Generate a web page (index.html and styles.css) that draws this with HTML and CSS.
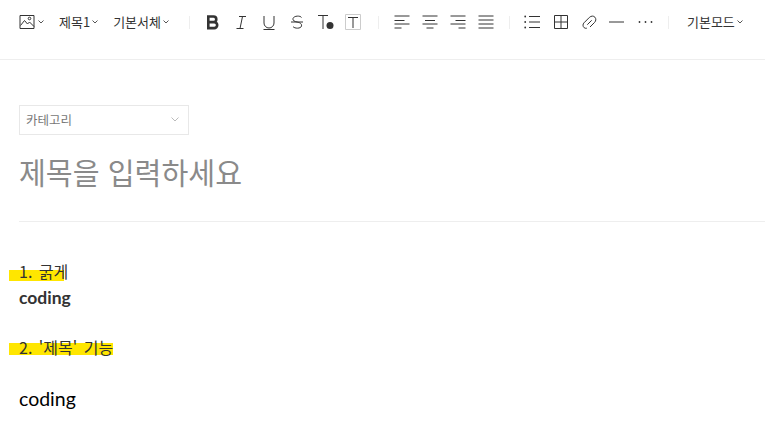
FILE: index.html
```html
<!DOCTYPE html>
<html lang="ko">
<head>
  <meta charset="UTF-8" />
  <title>글쓰기</title>
  <link rel="stylesheet" href="styles.css">
</head>
<body>

<!-- Toolbar -->
<header class="toolbar">
  <div class="tool-group group-insert">
    <button class="tool">
      <svg class="icon" width="16" height="16" viewBox="0 0 16 16"><path d="M1 1.500h14v13H1zM1.500 11.500l4-5 3 3.500 2-2 4.500 4.500" /><circle cx="10.500" cy="4.500" r="1.300" /></svg>
      <svg class="chev" width="6" height="4" viewBox="0 0 6 4"><path d="M.5.500 3 3 5.500.500" /></svg>
    </button>
    <button class="tool tool-text">제목1<svg class="chev" width="6" height="4" viewBox="0 0 6 4"><path d="M.5.500 3 3 5.500.500" /></svg></button>
    <button class="tool tool-text">기본서체<svg class="chev" width="6" height="4" viewBox="0 0 6 4"><path d="M.5.500 3 3 5.500.500" /></svg></button>
  </div>
  <span class="divider divider-a"></span>
  <div class="tool-group group-format">
    <svg class="icon" width="16" height="16" viewBox="0 0 16 16"><path class="thick" d="M3.300 2.500h5.200a2.800 2.800 0 0 1 0 5.600h-5.200zM3.300 8.100h5.900a3 3 0 0 1 0 6h-5.900z" /></svg>
    <svg class="icon" width="16" height="16" viewBox="0 0 16 16"><path d="M6 2.500h7M3.500 14.500h7M9.500 2.500 7 14.500" /></svg>
    <svg class="icon" width="16" height="16" viewBox="0 0 16 16"><path d="M3 2v7a5 5 0 0 0 10 0V2M2.500 15.500h11" /></svg>
    <svg class="icon" width="16" height="16" viewBox="0 0 16 16"><path d="M12.500 3.500C11.500 1.500 5 1.500 4 4.500 3.500 6.500 5.500 7.500 8 8c2.500.5 5 1.500 4.500 4-.5 2.800-7 2.800-8.500.5M2 8h12" /></svg>
    <svg class="icon icon-wide" width="17" height="16" viewBox="0 0 17 16"><path d="M1 1.500h10M6 1.500V15" /><circle class="dot" cx="13" cy="11.500" r="3.500" /></svg>
    <svg class="icon" width="16" height="16" viewBox="0 0 16 16"><path class="frame" d="M.5.500h15v15H.5z" /><path d="M3 3.500h10M8 3.500V14" /></svg>
  </div>
  <span class="divider divider-b"></span>
  <div class="tool-group group-align">
    <svg class="icon" width="16" height="14" viewBox="0 0 16 14"><path d="M.5 1h15M.5 5.500h10M.5 9h15M.5 13h7" /></svg>
    <svg class="icon" width="16" height="14" viewBox="0 0 16 14"><path d="M.5 1h15M3 5.500h10M.5 9h15M4.500 13h7" /></svg>
    <svg class="icon" width="16" height="14" viewBox="0 0 16 14"><path d="M.5 1h15M5.500 5.500h10M.5 9h15M8.500 13h7" /></svg>
    <svg class="icon" width="16" height="14" viewBox="0 0 16 14"><path d="M.5 1h15M.5 5h15M.5 9h15M.5 13h15" /></svg>
  </div>
  <span class="divider divider-c"></span>
  <div class="tool-group group-insert2">
    <svg class="icon" width="16" height="14" viewBox="0 0 16 14"><path d="M5 1.500h11M5 7h11M5 12.500h11" /><circle class="dot" cx="1.200" cy="1.500" r=".9" /><circle class="dot" cx="1.200" cy="7" r=".9" /><circle class="dot" cx="1.200" cy="12.500" r=".9" /></svg>
    <svg class="icon" width="14" height="14" viewBox="0 0 14 14"><path d="M.5.500h13v13H.5zM7 .5v13M.5 7h13" /></svg>
    <svg class="icon icon-link" width="15" height="15" viewBox="0 0 15 15"><path d="M5.300 9.700 9.700 5.300M4.800 13.200c-2 .6-3.800-1-3.800-3 0-1 .4-1.700 1-2.400L7.400 2.400c1.800-1.700 4.200-1.700 5.500-.2 1.300 1.500 1.200 3.700-.3 5.200L8 12" /></svg>
    <svg class="icon" width="15" height="14" viewBox="0 0 15 14"><path d="M0 7h15" /></svg>
    <svg class="icon" width="15" height="14" viewBox="0 0 15 14"><circle class="dot" cx="1.500" cy="7" r=".9" /><circle class="dot" cx="7.500" cy="7" r=".9" /><circle class="dot" cx="13.500" cy="7" r=".9" /></svg>
  </div>
  <span class="divider divider-d"></span>
  <button class="tool tool-text">기본모드<svg class="chev" width="6" height="4" viewBox="0 0 6 4"><path d="M.5.500 3 3 5.500.500" /></svg></button>
</header>

<!-- Editor -->
<main class="editor">
  <div class="category">
    <span>카테고리</span>
    <svg class="chev chev-light" width="8" height="5" viewBox="0 0 8 5"><path d="M.5.500 4 4 7.500.500" /></svg>
  </div>
  <h1 class="title">제목을 입력하세요</h1>
  <hr class="rule">
  <div class="content">
    <p class="line first"><span class="mark mark-short">1. 굵게</span></p>
    <p class="line bold">coding</p>
    <p class="line second"><span class="mark mark-tall">2. '제목' 기능</span></p>
    <p class="heading">coding</p>
  </div>
</main>

</body>
</html>
```

FILE: styles.css
```css
body {
  margin: 0;
  background: #fff;
  color: #333;
  font-family: 'Noto Sans CJK KR', 'Noto Sans', sans-serif;
  overflow: hidden;
}

.toolbar {
  display: flex;
  align-items: center;
  height: 44px;
  padding: 0 0 15px 19px;
  border-bottom: 1px solid #eee;
}

.tool-group {
  display: flex;
  align-items: center;
}

.tool {
  display: flex;
  align-items: center;
  padding: 0;
  border: none;
  background: none;
  color: #333;
  font: inherit;
}

.tool-text {
  font-size: 13px;
  line-height: 16px;
}

.tool-text .chev {
  margin-left: 2px;
}

.tool .icon + .chev {
  margin-left: 3px;
}

.group-insert {
  gap: 15px;
}

.group-format {
  gap: 12px;
}

.group-format .icon-wide {
  margin-right: -1px;
}

.group-align {
  gap: 12px;
}

.group-insert2 {
  gap: 14px;
}

.group-insert2 .icon-link {
  margin-right: -2px;
}

.icon path,
.icon circle {
  fill: none;
  stroke: #333;
  stroke-width: 1;
}

.icon .thick {
  stroke-width: 2.600;
}

.icon .frame {
  stroke: #ccc;
}

.icon .dot {
  fill: #333;
  stroke: none;
}

.chev path {
  fill: none;
  stroke: #555;
  stroke-width: 1;
}

.chev-light path {
  stroke: #bbb;
}

.divider {
  width: 1px;
  height: 13px;
  background: #eee;
}

.divider-a {
  margin: 0 15px 0 20px;
}

.divider-b {
  margin: 0 15px 0 17px;
}

.divider-c {
  margin: 0 14px 0 15px;
}

.divider-d {
  margin: 0 18px 0 15px;
}

.editor {
  padding: 45px 0 0 19px;
}

.category {
  display: flex;
  align-items: center;
  justify-content: space-between;
  width: 170px;
  height: 30px;
  padding: 0 9px 2px 6px;
  box-sizing: border-box;
  border: 1px solid #e8e8e8;
  font-size: 12.500px;
  color: #777;
}

.title {
  margin: 17px 0 0;
  font-size: 29.200px;
  line-height: 38px;
  font-weight: 400;
  color: #8a8a8a;
}

.rule {
  margin: 31px 0 0;
  border: none;
  border-top: 1px solid #eee;
}

.content {
  padding-top: 38px;
}

.line {
  margin: 0;
  font-size: 16px;
  line-height: 22px;
  word-spacing: 2px;
  color: #333;
}

.mark {
  margin-left: -10px;
  padding-left: 10px;
  background-image: linear-gradient(to bottom, transparent 11px, #ffe600 11px, #ffe600 22px, transparent 22px);
  background-repeat: no-repeat;
}

.mark-short {
  background-size: calc(100% - 4px) 100%;
}

.mark-tall {
  background-image: linear-gradient(to bottom, transparent 8px, #ffe600 8px, #ffe600 20px, transparent 20px);
}

.bold {
  margin-top: 5px;
  font-family: Lato, sans-serif;
  font-weight: 700;
  font-size: 17.500px;
}

.second {
  margin-top: 27px;
}

.heading {
  margin: 27px 0 0;
  font-family: Lato, sans-serif;
  font-size: 19.500px;
  line-height: 28px;
  color: #000;
}
```
